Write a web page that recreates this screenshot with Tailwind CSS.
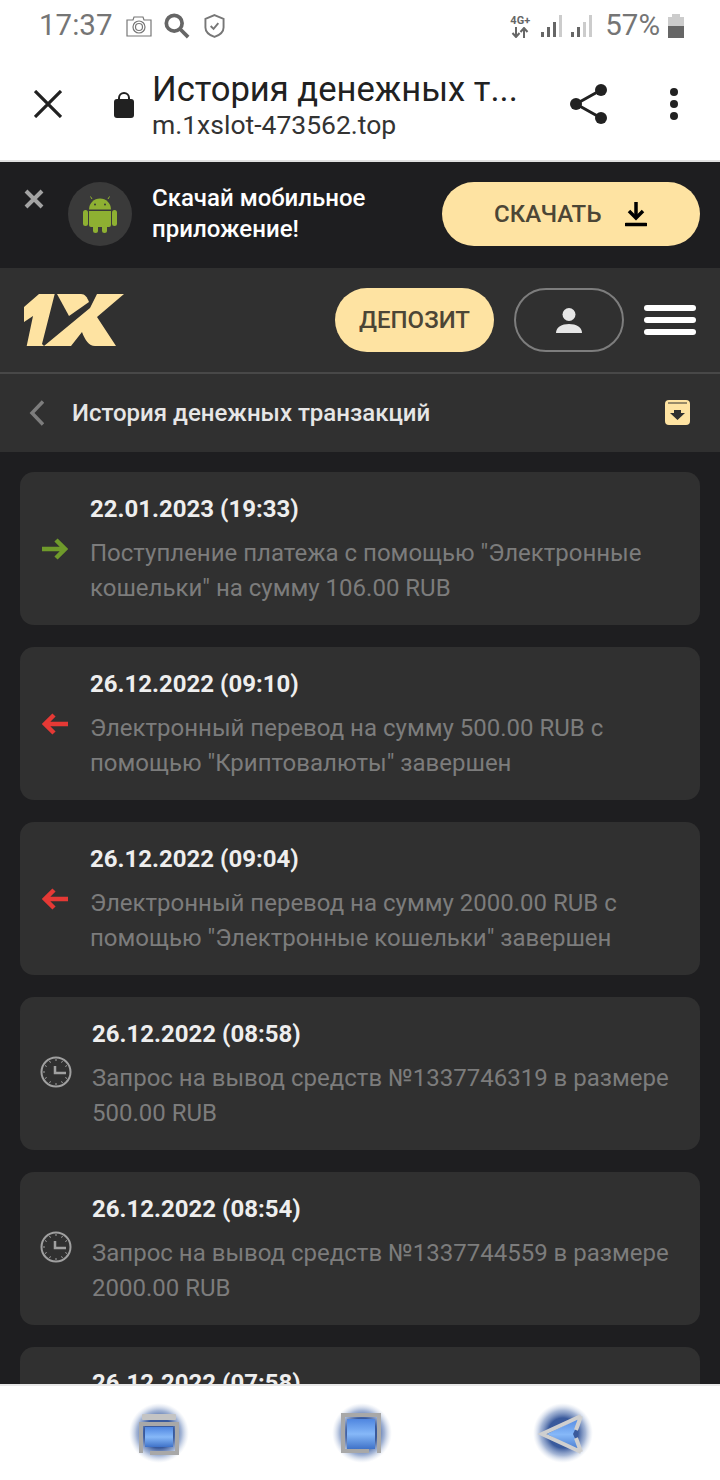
<!DOCTYPE html>
<html lang="ru">
<head>
    <meta charset="UTF-8">
    <meta name="viewport" content="width=device-width, initial-scale=1.0">
    <title>История денежных транзакций</title>
    <script src="https://cdn.jsdelivr.net/npm/@tailwindcss/browser@4"></script>
</head>
<body class="bg-[#1e1e20] font-['Roboto',sans-serif]">
<div class="w-[720px] h-[1480px] flex flex-col overflow-hidden">

    <!-- Status bar -->
    <div class="h-[52px] shrink-0 bg-white flex items-center pl-[39px] pr-[36px] text-[#757575]">
        <span class="text-[29.500px] leading-none">17:37</span>
        <svg class="ml-[14px]" width="26" height="21" viewBox="0 0 26 21" fill="none" stroke="#777" stroke-width="1.2"><path d="M1 4h6l1-3h9l1 3h7v16H1z"/><circle cx="13" cy="11" r="6"/><circle cx="13" cy="11" r="3.5"/></svg>
        <svg class="ml-[12px]" width="26" height="26" viewBox="0 0 28 28" fill="none" stroke="#666" stroke-width="4"><circle cx="11" cy="11" r="8.5"/><path d="M17 17l9 9"/></svg>
        <svg class="ml-[14px]" width="21" height="26" viewBox="0 0 22 26" fill="none" stroke="#777" stroke-width="2"><path d="M11 1.500l9.500 4v9c0 4.500-4 8-9.500 10-5.500-2-9.500-5.500-9.500-10v-9z"/><path d="M7 13l3 3 5-6"/></svg>
        <div class="ml-auto flex items-center">
            <div class="flex flex-col items-center w-[24px] text-[#666]">
                <span class="text-[11px] leading-[12px] font-bold">4G+</span>
                <svg width="18" height="11" viewBox="0 0 18 11" fill="none" stroke="#666" stroke-width="2"><path d="M5 0v9M1.500 6l3.500 4 3.500-4M13 11V2M9.500 5L13 1l3.500 4"/></svg>
            </div>
            <svg class="ml-[9px]" width="22" height="24" viewBox="0 0 22 24"><rect x="0" y="18" width="3" height="5" fill="#666"/><rect x="6" y="13" width="3" height="10" fill="#666"/><rect x="12" y="8" width="3" height="15" fill="#666"/><rect x="18" y="1" width="3" height="22" fill="#ccc"/></svg>
            <svg class="ml-[8px]" width="22" height="24" viewBox="0 0 22 24"><rect x="0" y="18" width="3" height="5" fill="#666"/><rect x="6" y="13" width="3" height="10" fill="#666"/><rect x="12" y="8" width="3" height="15" fill="#ccc"/><rect x="18" y="1" width="3" height="22" fill="#ccc"/></svg>
            <span class="ml-[12px] text-[29.500px] leading-none">57%</span>
            <svg class="ml-[8px]" width="16" height="24" viewBox="0 0 16 24"><path d="M4 0h8v3h4v21H0V3h4z" fill="#ccc"/><rect y="12" width="16" height="12" fill="#666"/></svg>
        </div>
    </div>

    <!-- Browser toolbar -->
    <div class="h-[110px] shrink-0 bg-white border-b-2 border-[#e0e0e0] pb-[4px] flex items-center text-[#212121]">
        <svg class="ml-[34px] shrink-0" width="28" height="28" viewBox="0 0 28 28" fill="none" stroke="#212121" stroke-width="3.200"><path d="M1 1l26 26M27 1L1 27"/></svg>
        <svg class="ml-[52px] shrink-0" width="20" height="27" viewBox="0 0 20 27"><path d="M5 10V7a5 5 0 0 1 10 0v3" fill="none" stroke="#212121" stroke-width="2"/><rect y="8" width="20" height="19" rx="3" fill="#212121"/></svg>
        <div class="ml-[18px] w-[370px] pt-[2px]">
            <div class="text-[34.600px] leading-[40px] whitespace-nowrap">История денежных т...</div>
            <div class="text-[26.500px] leading-[32px] text-[#333]">m.1xslot-473562.top</div>
        </div>
        <svg class="ml-[48px] shrink-0" width="38" height="42" viewBox="0 0 38 42" fill="#212121"><circle cx="6" cy="21" r="6"/><circle cx="31" cy="7" r="6"/><circle cx="31" cy="35" r="6"/><path d="M6 21L31 7M6 21l25 14" stroke="#212121" stroke-width="3"/></svg>
        <div class="ml-[62px] flex flex-col gap-[4px]">
            <span class="block w-[8px] h-[8px] rounded-full bg-[#212121]"></span>
            <span class="block w-[8px] h-[8px] rounded-full bg-[#212121]"></span>
            <span class="block w-[8px] h-[8px] rounded-full bg-[#212121]"></span>
        </div>
    </div>

    <!-- App banner -->
    <div class="h-[106px] shrink-0 bg-[#1e1e20] relative flex items-center pl-[68px] pr-[20px] pb-[2px]">
        <svg class="absolute left-[24px] top-[27px]" width="20" height="20" viewBox="0 0 20 20" stroke="#a3a3a3" stroke-width="4"><path d="M2 2l16 16M18 2L2 18"/></svg>
        <div class="w-[64px] h-[64px] rounded-full bg-[#3a3a3a] flex items-center justify-center">
            <svg width="34" height="38" viewBox="0 0 34 38" fill="#8eb032"><path d="M6 14.500a11 11 0 0 1 22 0z"/><path d="M9 4L7.500 1.500M25 4l1.500-2.500" stroke="#8eb032" stroke-width="1"/><path d="M6 16h22v14a2 2 0 0 1-2 2H8a2 2 0 0 1-2-2z"/><rect x="0" y="15" width="5" height="16" rx="2.500"/><rect x="29" y="15" width="5" height="16" rx="2.500"/><rect x="10" y="28" width="5" height="10" rx="2.500"/><rect x="19" y="28" width="5" height="10" rx="2.500"/><circle cx="12" cy="9.500" r="1" fill="#3a3a3a"/><circle cx="22" cy="9.500" r="1" fill="#3a3a3a"/></svg>
        </div>
        <div class="ml-[20px] text-white text-[24px] leading-[31px] font-medium">Скачай мобильное<br>приложение!</div>
        <div class="ml-auto w-[258px] h-[64px] rounded-[32px] bg-[#fee3a2] flex items-center pl-[52px] text-[#4c4636] text-[24px] font-medium">
            СКАЧАТЬ
            <svg class="ml-[24px]" width="22" height="26" viewBox="0 0 22 26" fill="none" stroke="#000"><path d="M11 1v15" stroke-width="3.500"/><path d="M4 10l7 7 7-7" stroke-width="3.500"/><path d="M1 23.500h20" stroke-width="3.500" stroke-linecap="round"/></svg>
        </div>
    </div>

    <!-- Site header -->
    <div class="h-[106px] shrink-0 bg-[#303030] border-b-2 border-[#484848] flex items-center pl-[24px] pr-[24px]">
        <svg width="100" height="52" viewBox="0 0 100 52" fill="#fee3a2">
            <path d="M0 13L15 0H30.700L18 50 20 52H2.700L9 22 0 28z"/>
            <path d="M33 0H57C61 0 63 3 65 8L45 22z"/>
            <path d="M73 0H100L73 23 92 52H71C65 52 61 46 58 38L47 52H20L66 14z"/>
        </svg>
        <div class="ml-auto w-[159px] h-[64px] rounded-[32px] bg-[#fee3a2] flex items-center justify-center text-[#4c4636] text-[24px] font-medium">ДЕПОЗИТ</div>
        <div class="ml-[20px] w-[110px] h-[64px] rounded-[32px] border-2 border-[#7d7d7d] flex items-center justify-center">
            <svg width="26" height="25" viewBox="0 0 26 25" fill="#e6e6e6"><circle cx="13" cy="6.500" r="6.500"/><path d="M0 25c0-6 6-9 13-9s13 3 13 9z"/></svg>
        </div>
        <div class="ml-[20px] flex flex-col gap-[6px]">
            <span class="block w-[52px] h-[6px] rounded-[3px] bg-white"></span>
            <span class="block w-[52px] h-[6px] rounded-[3px] bg-white"></span>
            <span class="block w-[52px] h-[6px] rounded-[3px] bg-white"></span>
        </div>
    </div>

    <!-- Page title -->
    <div class="h-[78px] shrink-0 bg-[#303030] flex items-center pl-[29px] pr-[30px]">
        <svg width="15" height="26" viewBox="0 0 15 26" fill="none" stroke="#7d7d7d" stroke-width="3.500"><path d="M14 1.500L3 13l11 11.500"/></svg>
        <span class="ml-[28px] text-[24px] font-medium text-[#e6e6e6]">История денежных транзакций</span>
        <svg class="ml-auto mt-[-2px]" width="25" height="25" viewBox="0 0 25 25"><rect width="25" height="25" rx="4" fill="#fee3a2"/><path d="M3 3h19" stroke="#303030" stroke-width="1"/><path d="M9 10h7v3h4l-7.500 7L5 13h4z" fill="#303030"/></svg>
    </div>

    <!-- Transactions -->
    <div class="flex-1 min-h-0 overflow-hidden bg-[#1e1e20] px-[20px] pt-[20px] flex flex-col gap-[22px]">

        <div class="h-[153px] shrink-0 rounded-[14px] bg-[#303030] flex items-center pl-[22px] pr-[20px] pt-[2px]">
            <svg class="shrink-0 w-[26px] mt-[-1px]" width="26" height="22" viewBox="0 0 26 22" fill="none" stroke="#6f9a2b" stroke-width="4.500"><path d="M0 11h23M14 2l9 9-9 9"/></svg>
            <div class="ml-[22px]">
                <div class="text-[24px] leading-[30px] font-bold text-[#eeeeee]">22.01.2023 (19:33)</div>
                <div class="mt-[12px] text-[24px] leading-[35px] text-[#7c7c7c]">Поступление платежа с помощью "Электронные кошельки" на сумму 106.00 RUB</div>
            </div>
        </div>

        <div class="h-[153px] shrink-0 rounded-[14px] bg-[#303030] flex items-center pl-[22px] pr-[20px] pt-[2px]">
            <svg class="shrink-0 w-[26px] mt-[-1px]" width="26" height="22" viewBox="0 0 26 22" fill="none" stroke="#e53935" stroke-width="4.500"><path d="M26 11H3M12 2l-9 9 9 9"/></svg>
            <div class="ml-[22px]">
                <div class="text-[24px] leading-[30px] font-bold text-[#eeeeee]">26.12.2022 (09:10)</div>
                <div class="mt-[12px] text-[24px] leading-[35px] text-[#7c7c7c]">Электронный перевод на сумму 500.00 RUB с помощью "Криптовалюты" завершен</div>
            </div>
        </div>

        <div class="h-[153px] shrink-0 rounded-[14px] bg-[#303030] flex items-center pl-[22px] pr-[20px] pt-[2px]">
            <svg class="shrink-0 w-[26px] mt-[-1px]" width="26" height="22" viewBox="0 0 26 22" fill="none" stroke="#e53935" stroke-width="4.500"><path d="M26 11H3M12 2l-9 9 9 9"/></svg>
            <div class="ml-[22px]">
                <div class="text-[24px] leading-[30px] font-bold text-[#eeeeee]">26.12.2022 (09:04)</div>
                <div class="mt-[12px] text-[24px] leading-[35px] text-[#7c7c7c]">Электронный перевод на сумму 2000.00 RUB с помощью "Электронные кошельки" завершен</div>
            </div>
        </div>

        <div class="h-[153px] shrink-0 rounded-[14px] bg-[#303030] flex items-center pl-[20px] pr-[20px] pt-[2px]">
            <svg class="shrink-0 mt-[-5px]" width="32" height="32" viewBox="0 0 32 32" fill="none" stroke="#a0a0a0"><circle cx="16" cy="16" r="14.500" stroke-width="2"/><path d="M15 10v7h11" stroke-width="2.500"/><path d="M16 3v2M16 27v2M3 16h2M9.500 5l1 1.700M22.500 5l-1 1.700M5 9.500l1.700 1M27 9.500l-1.700 1M5 22.500l1.700-1M27 22.500l-1.700-1M9.500 27l1-1.700M22.500 27l-1-1.700" stroke-width="1"/></svg>
            <div class="ml-[20px]">
                <div class="text-[24px] leading-[30px] font-bold text-[#eeeeee]">26.12.2022 (08:58)</div>
                <div class="mt-[12px] text-[24px] leading-[35px] text-[#7c7c7c]">Запрос на вывод средств №1337746319 в размере 500.00 RUB</div>
            </div>
        </div>

        <div class="h-[153px] shrink-0 rounded-[14px] bg-[#303030] flex items-center pl-[20px] pr-[20px] pt-[2px]">
            <svg class="shrink-0 mt-[-5px]" width="32" height="32" viewBox="0 0 32 32" fill="none" stroke="#a0a0a0"><circle cx="16" cy="16" r="14.500" stroke-width="2"/><path d="M15 10v7h11" stroke-width="2.500"/><path d="M16 3v2M16 27v2M3 16h2M9.500 5l1 1.700M22.500 5l-1 1.700M5 9.500l1.700 1M27 9.500l-1.700 1M5 22.500l1.700-1M27 22.500l-1.700-1M9.500 27l1-1.700M22.500 27l-1-1.700" stroke-width="1"/></svg>
            <div class="ml-[20px]">
                <div class="text-[24px] leading-[30px] font-bold text-[#eeeeee]">26.12.2022 (08:54)</div>
                <div class="mt-[12px] text-[24px] leading-[35px] text-[#7c7c7c]">Запрос на вывод средств №1337744559 в размере 2000.00 RUB</div>
            </div>
        </div>

        <div class="h-[153px] shrink-0 rounded-[14px] bg-[#303030] pl-[72px] pt-[21px]">
            <div class="text-[24px] leading-[30px] font-bold text-[#eeeeee]">26.12.2022 (07:58)</div>
        </div>
    </div>

    <!-- System navigation -->
    <div class="h-[96px] shrink-0 bg-white border-t-2 border-[#e8e8e8] flex">
        <svg class="ml-[129px] mt-[17px]" width="60" height="60" viewBox="0 0 60 60">
            <defs>
                <radialGradient id="glow"><stop offset="0.5" stop-color="#3a5a9c"/><stop offset="0.75" stop-color="#7f97c4" stop-opacity="0.7"/><stop offset="1" stop-color="#c3cfe4" stop-opacity="0"/></radialGradient>
                <linearGradient id="blue" x1="0" y1="0" x2="0" y2="1"><stop offset="0" stop-color="#4f86e0"/><stop offset="0.5" stop-color="#86b8f8"/><stop offset="1" stop-color="#3f72c8"/></linearGradient>
            </defs>
            <circle cx="30" cy="30" r="30" fill="url(#glow)"/>
            <rect x="16" y="24" width="28" height="20" fill="url(#blue)"/>
            <rect x="13" y="11" width="34" height="6" rx="1" fill="#c4c4c4"/>
            <path d="M12 50V21h36v29H21" fill="none" stroke="#a8a8a8" stroke-width="4"/>
        </svg>
        <svg class="ml-[143px] mt-[17px]" width="60" height="60" viewBox="0 0 60 60">
            <circle cx="30" cy="30" r="30" fill="url(#glow)"/>
            <rect x="15" y="16" width="28" height="30" fill="url(#blue)"/>
            <path d="M47 50V12H11v36h26" fill="none" stroke="#a8a8a8" stroke-width="4"/>
        </svg>
        <svg class="ml-[141px] mt-[17px]" width="60" height="60" viewBox="0 0 60 60">
            <circle cx="30" cy="30" r="30" fill="url(#glow)"/>
            <path d="M48 14L14 31l34 18-8-18z" fill="url(#blue)"/>
            <path d="M48 13L9 31l39 18M48 13L43 27M48 49L43 35" fill="none" stroke="#cfcfcf" stroke-width="4"/>
        </svg>
    </div>
</div>
</body>
</html>
